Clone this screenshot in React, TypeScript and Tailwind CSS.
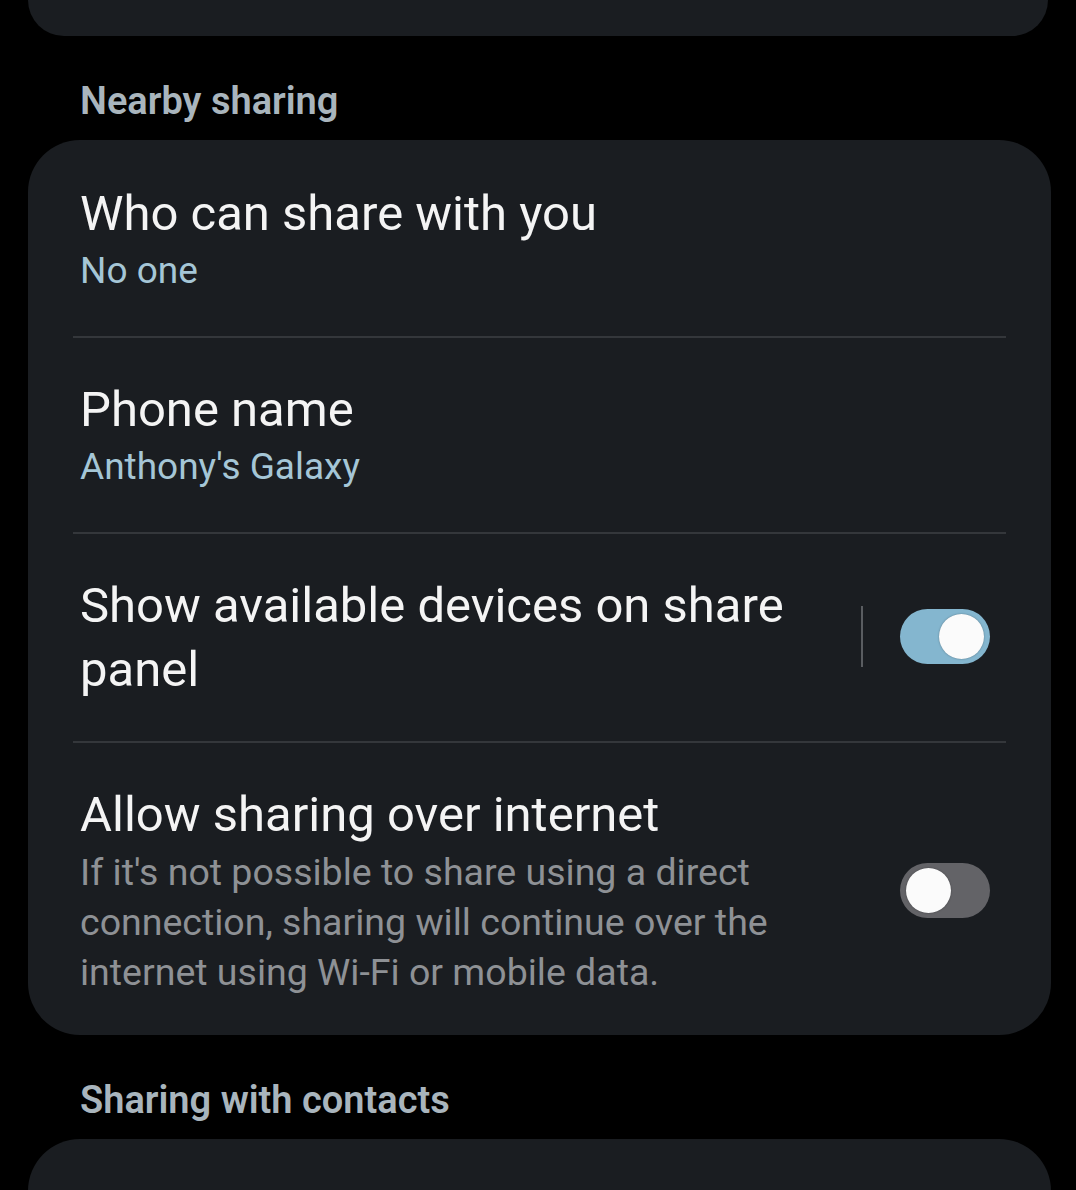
import React from "react";

const font = { fontFamily: "Roboto, 'Noto Sans', sans-serif" };

function Toggle({ on }: { on: boolean }) {
  return (
    <div
      className={
        "flex h-[55px] w-[90px] shrink-0 items-center rounded-full px-[6px] " +
        (on ? "justify-end bg-[#84b6cf]" : "justify-start bg-[#636367]")
      }
    >
      <div className="h-[45px] w-[45px] rounded-full bg-[#fbfbfb] shadow-[0_0_2px_rgba(0,0,0,0.35)]" />
    </div>
  );
}

function Divider() {
  return <div className="mx-[45px] h-[2px] bg-[#34373b]" />;
}

export default function App() {
  return (
    <div className="min-h-[1190px] w-[1076px] overflow-hidden bg-black" style={font}>
      <div className="ml-[28px] mr-[28px] h-[36px] rounded-b-[52px] bg-[#1a1d21]" />

      <div className="px-[80px] pt-[45px] pb-[19px]">
        <div className="h-[40px] text-[38px] font-semibold leading-[40px] tracking-[0px] text-[#a9b5bd]">
          Nearby sharing
        </div>
      </div>

      <div className="ml-[28px] mr-[25px] rounded-[52px] bg-[#1a1d21]">
        <div className="pl-[52px] pr-[60px] pt-[42px] pb-[40px]">
          <div className="text-[49px] leading-[64px] text-[#f4f4f4]">Who can share with you</div>
          <div className="text-[37px] leading-[50px] text-[#a5c6d6]">No one</div>
        </div>
        <Divider />
        <div className="pl-[52px] pr-[60px] pt-[40px] pb-[40px]">
          <div className="text-[49px] leading-[64px] text-[#f4f4f4]">Phone name</div>
          <div className="text-[37px] leading-[50px] text-[#a5c6d6]">Anthony's Galaxy</div>
        </div>
        <Divider />
        <div className="flex items-center pl-[52px] pr-[61px] pt-[40px] pb-[39px]">
          <div className="w-[740px] text-[49px] leading-[64px] text-[#f4f4f4]">
            Show available devices on share panel
          </div>
          <div className="ml-auto mb-[4px] flex items-center">
            <div className="h-[61px] w-[2px] bg-[#5a5d61]" />
            <div className="ml-[37px]">
              <Toggle on={true} />
            </div>
          </div>
        </div>
        <Divider />
        <div className="flex items-center pl-[52px] pr-[61px] pt-[40px] pb-[38px]">
          <div className="w-[715px]">
            <div className="text-[49px] leading-[64px] text-[#f4f4f4]">Allow sharing over internet</div>
            <div className="text-[37.5px] leading-[50px] text-[#8e9195]">
              If it's not possible to share using a direct connection, sharing will continue over the internet using Wi-Fi or mobile data.
            </div>
          </div>
          <div className="ml-auto">
            <Toggle on={false} />
          </div>
        </div>
      </div>

      <div className="px-[80px] pt-[45px] pb-[19px]">
        <div className="h-[40px] text-[38px] font-semibold leading-[40px] tracking-[0px] text-[#a9b5bd]">
          Sharing with contacts
        </div>
      </div>

      <div className="ml-[28px] mr-[25px] h-[200px] rounded-t-[52px] bg-[#1a1d21]" />
    </div>
  );
}
